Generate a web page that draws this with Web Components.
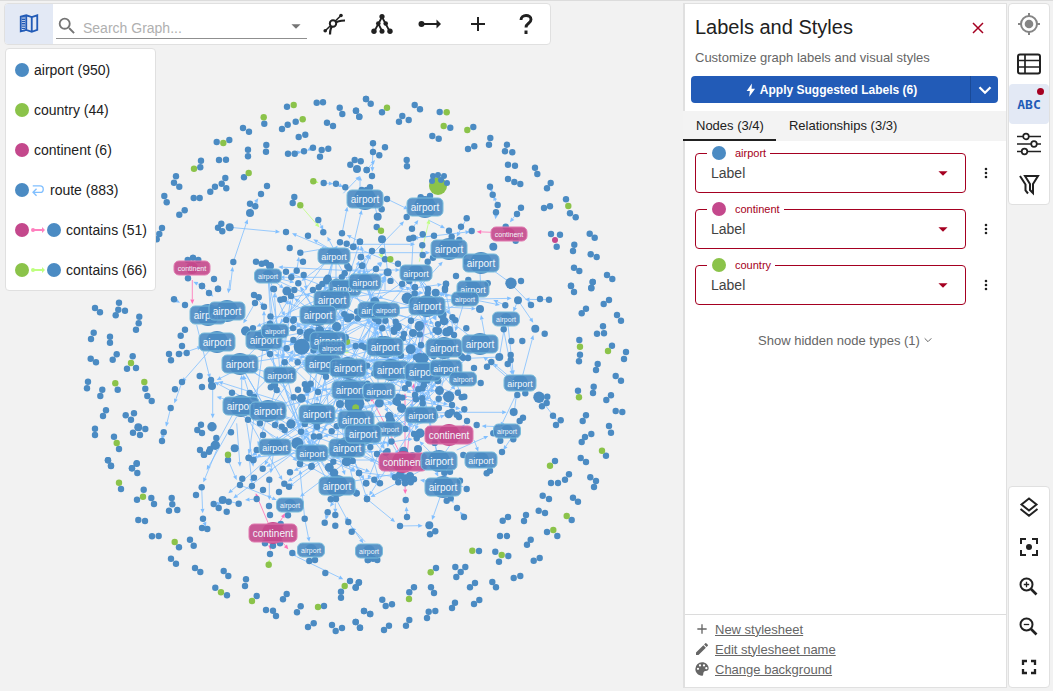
<!DOCTYPE html>
<html lang="en">
<head>
<meta charset="utf-8">
<title>Graph Explorer</title>
<style>
  html, body { margin: 0; height: 100%; }
  body { background: #f2f2f2; color: #212121; font-family: "Liberation Sans", Arial, sans-serif; font-size: 14px; overflow: hidden; }
</style>
</head>
<body>
<graph-app></graph-app>
<script>
const define = (name, html, ready) => customElements.define(name, class extends HTMLElement {
  connectedCallback() {
    if (this.shadowRoot) return;
    const t = document.createElement('template');
    t.innerHTML = html;
    this.attachShadow({ mode: 'open' }).append(t.content.cloneNode(true));
    if (ready) ready.call(this, this.shadowRoot);
  }
});

/* ---------- icons ---------- */
const line = (d, w = 2) => `<path d="${d}" fill="none" stroke="currentColor" stroke-width="${w}"/>`;
const fill = d => `<path d="${d}" fill="currentColor"/>`;
const ICONS = {
  map: line('M3 4l6-1.500 6 2 6-2v16l-6 2-6-2-6 1.500zM9 3v16M15 5v16') + '<path d="M6 3.500v16.500" stroke="currentColor" stroke-width="3.500" stroke-dasharray="1.500 1"/>',
  search: fill('M15.500 14h-.79l-.28-.27A6.470 6.470 0 0 0 16 9.500 6.500 6.500 0 1 0 9.500 16c1.610 0 3.090-.59 4.230-1.570l.27.28v.79l5 4.990L20.490 19l-4.990-5zm-6 0a4.500 4.500 0 1 1 0-9 4.500 4.500 0 0 1 0 9z'),
  caret: fill('M7 10l5 5 5-5z'),
  expand: line('M3.500 18.500L19 3.500', 1.600) + line('M8 22.500C8 14 12 8.500 23 8.500', 2.200) + '<circle cx="11" cy="11.500" r="3.200" fill="#fff" stroke="currentColor" stroke-width="2"/>' + '<circle cx="19" cy="3.500" r="1.800"/><circle cx="3.200" cy="18.800" r="1.800"/>',
  tree: line('M12 5L4.500 19M12 5l7.500 14M8.500 12l3.500 7', 1.800) + '<circle cx="12" cy="4.500" r="2.600"/><circle cx="8.300" cy="11.500" r="2.300"/><circle cx="15.700" cy="11.500" r="2.300"/><circle cx="4" cy="19.300" r="2.700"/><circle cx="12" cy="19.300" r="2.500"/><circle cx="20" cy="19.300" r="2.700"/>',
  edge: line('M4 12h16') + '<circle cx="3.500" cy="12" r="3"/>' + fill('M18.500 7.500L23 12l-4.500 4.500z'),
  plus: line('M12 5v14M5 12h14'),
  help: line('M7 8c0-6 10-6 10-.5 0 4-5 3.500-5 8', 2.900) + '<rect x="10.500" y="18.500" width="3" height="3.500"/>',
  close: line('M6 6l12 12M18 6L6 18', 1.800),
  bolt: fill('M13.500 1L4.500 13.500h5.500l-1 10 10-13.500h-6z'),
  down: line('M6 9l6 6 6-6', 2.500),
  downThin: line('M4 8l8 8 8-8', 2.400),
  dots: '<circle cx="12" cy="5" r="2.200"/><circle cx="12" cy="12" r="2.200"/><circle cx="12" cy="19" r="2.200"/>',
  target: '<circle cx="12" cy="12" r="4.300"/><circle cx="12" cy="12" r="8" fill="none" stroke="currentColor" stroke-width="2"/>' + line('M12 1v3M12 20v3M1 12h3M20 12h3'),
  table: '<rect x="1" y="2.500" width="22" height="19" rx="2" fill="none" stroke="currentColor" stroke-width="2"/>' + line('M1 8.500h22M1 15h22M8 3v18', 1.700),
  sliders: line('M0 4.500h24M0 12h24M0 19.500h24', 1.700) + '<g fill="#fff" stroke="currentColor" stroke-width="1.700"><circle cx="9" cy="4.500" r="2.800"/><circle cx="17" cy="12" r="2.800"/><circle cx="7.500" cy="19.500" r="2.800"/></g>',
  filter: line('M8 4h13l-5 8v9l-3-3v-6z') + line('M3 4l5.500 8.500v6l2.500 3', 2),
  layers: line('M12 3.500l7.500 6-7.500 6-7.500-6zM3.500 14l8.500 6.700 8.500-6.700'),
  center: line('M4 9V4h5M15 4h5v5M20 15v5h-5M9 20H4v-5') + '<circle cx="12" cy="12" r="3"/>',
  zoomin: '<circle cx="9.500" cy="9.500" r="6" fill="none" stroke="currentColor" stroke-width="2"/>' + line('M14 14l5.500 5.500', 2.600) + line('M9.500 6.800v5.400M6.800 9.500h5.400', 1.300),
  zoomout: '<circle cx="9.500" cy="9.500" r="6" fill="none" stroke="currentColor" stroke-width="2"/>' + line('M14 14l5.500 5.500', 2.600) + line('M6.800 9.500h5.400', 1.300),
  full: line('M6 10V6h4M14 6h4v4M18 14v4h-4M10 18H6v-4', 2.300),
  pencil: fill('M3 17.250V21h3.750L17.810 9.940l-3.750-3.750zM20.710 7.040a1 1 0 0 0 0-1.410l-2.340-2.340a1 1 0 0 0-1.410 0l-1.830 1.830 3.750 3.750z'),
  palette: '<path fill="currentColor" fill-rule="evenodd" d="M12 2a10 10 0 0 0-10 10c0 5 4 10 10 10 3 0 1-4 3-6 2-1.500 7 0 7-5 0-5-4.500-9-10-9zM6 10a1.700 1.700 0 1 1 0 3.400A1.700 1.700 0 0 1 6 10zM9 5a1.700 1.700 0 1 1 0 3.400A1.700 1.700 0 0 1 9 5zM15 5a1.700 1.700 0 1 1 0 3.400A1.700 1.700 0 0 1 15 5zM18.500 9a1.700 1.700 0 1 1 0 3.400A1.700 1.700 0 0 1 18.500 9z"/>',
  loop: line('M3 5h12.500a5 5 0 0 1 0 11H4M9.500 10L3.500 16l6 6', 2.300)
};
define('app-icon', `<style>:host{display:inline-flex;width:24px;height:24px;flex:none}svg{width:100%;height:100%}</style><svg viewBox="0 0 24 24" fill="currentColor" aria-hidden="true"></svg>`,
  function (r) { r.querySelector('svg').innerHTML = ICONS[this.getAttribute('name')]; });

/* ---------- graph canvas ---------- */
const BLUE = '#4b8bc3', GREEN = '#8bc34a', PINK = '#c4488c';
/* Node positions are stored per tile, in thirds of a pixel; an optional third number is the radius. */
const TILES = [
 { x: 80, y: 90,
   b: '621,50 710,38 729,37 779,53 787,72 828,62 838,80 858,27 553,101 647,95 623,104 606,117 741,98 759,108 656,141 676,134 489,114 507,125 410,156 448,150 559,165 558,185 504,179 504,199 417,210 438,209 624,191 644,191 672,184 699,173 725,180 745,176 720,200 363,212 361,232 288,259 282,278 298,290 492,262 436,264 425,281 439,295 405,290 391,305 253,318 260,337 341,324 359,324 314,361 298,374 246,414 238,432 230,448 561,288 543,312 510,341 526,349 510,369,12 424,401 414,413 427,424 449,412,12 618,426 684,437 629,474 661,488 669,515 650,542 671,555 634,562 618,545 655,580 460,516 731,279 768,281 796,292 643,321 638,339 715,390 730,427 786,430 780,457 800,461 820,470 840,455 824,210 842,214 811,224 831,237,12 860,240 802,528 842,501 846,527 744,563 727,582 716,592 528,515 545,521 558,518 570,528,12 324,565 366,588 402,567 414,596 582,597 643,600 323,510 339,503 355,510 845,300 860,300',
   g: '641,45 551,82 668,88 430,159 342,236 506,249 700,274 661,346',
   e: '449,412,600,426 460,516,503,388 450,600,458,530 731,279,760,281 768,281,790,291 510,360,535,325 755,480,636,430 755,480,700,448 786,430,802,350 820,465,845,360 763,480,742,440 661,488,740,475 870,545,595,531 870,562,600,562 366,588,340,575 715,390,730,420 800,530,790,560 650,542,657,500 671,555,680,600 768,500,768,600 624,191,665,186 699,173,680,182 840,300,840,258 790,310,840,258 840,455,800,435',
   ge: '661,346,718,412 700,274,716,278' },
 { x: 350, y: 90,
   b: '48,27 62,41 18,62 28,80 96,67 194,45 210,58 157,78 147,95 176,90 269,66 301,113 370,111 247,138 266,146 354,177 373,169 421,144 417,164 471,164 465,184 487,187 170,210 171,229 69,160 69,186 88,196 105,172 66,258 50,240 474,224 495,227 555,233 562,252 474,267 493,276 511,282 602,279 591,295 420,290 428,314 443,345 438,367 513,353 501,372 582,354 600,349 648,328 660,370 677,382 111,327 170,381 350,385 333,410 297,422 365,423 252,437 186,416 218,433 178,446 190,443 217,466 218,495 95,358 83,380,12 80,411 96,448,12 66,483 97,483 105,508 144,521 113,547,12 30,455 10,471 33,501 37,527 78,537 467,410 497,452 430,470,12 603,432 630,434 620,470 673,464 669,483 719,431 734,443 722,493 740,501 672,533 688,543 771,555 787,567 728,576 724,593 663,588 483,580,17 513,573 318,558 288,581 195,592 234,597 233,515 249,503 355,570 285,595 413,580 212,322 240,318 305,440 328,450 350,515 60,292',
   g: '111,53 290,67 281,108 352,120 655,348 93,422 121,508',
   e: '111,327,175,358 440,365,436,388 443,345,430,318 513,353,480,397 420,290,427,308 178,446,360,425 252,437,190,445 435,545,483,580 69,160,67,245 50,240,75,210 0,560,162,394 235,390,285,415 350,385,320,440 0,463,195,463 0,488,240,488 0,540,150,540 80,370,60,285 186,416,205,390 190,440,182,590 113,547,100,440 355,570,320,600 200,600,278,515 390,550,393,600 113,547,160,600 105,600,105,540',
   ge: '208,515,238,388 121,508,85,493', me: '425,427,380,425' },
 { x: 80, y: 280,
   b: '45,84 60,97 117,68 115,89 107,106 135,92 178,110 176,130 168,149 41,158 33,177 90,170 90,188 110,223 98,239 32,236 48,247 158,229 141,266 168,264 24,305 21,325 67,329 61,348 113,329 196,326 202,348 215,363 78,391 69,408 137,406 162,400 153,419 45,446 45,465 175,442,12 196,447 159,458 180,465 102,470 117,507 84,541 93,557 170,550 156,565 315,75 282,58 315,149 302,167 306,198 297,222,10 320,219 267,222 273,241 306,306 285,328 272,384 251,457 246,483 359,288 366,321 393,300 396,318,12 366,18 387,39 414,27 363,434 352,450 366,459 396,440,14 409,474 406,496,14 390,508 360,510 372,524 444,540 464,505,12 453,457 504,419 456,338 509,339 522,45 536,52 525,69 552,80 580,27 612,57 633,48 497,153,14 570,222 614,247 620,205 653,247 582,315 590,330 641,352 654,329 681,327,12 714,336 738,290 549,465 540,430 585,435 605,440 633,432,14 614,450 663,455 755,454 711,440 652,490,18 660,550 694,560 780,372,12 823,370,30 665,200,24 690,165,20 720,150,12 770,140,14 660,155 640,180 814,110 833,115 845,197 827,198 506,533 520,540 760,545 800,545,14 530,510',
   g: '153,249 106,310 193,306 110,489 444,524 827,383 801,185',
   e: '350,135,390,295 390,210,306,306 306,306,283,370 272,384,258,440 251,457,246,480 398,318,398,415 300,222,365,200 485,345,485,285 510,350,490,285 600,287,520,265 470,410,380,570 460,400,400,510 490,410,600,480 540,390,410,350 620,370,415,305 282,58,300,68 366,18,400,50 450,0,445,40 525,69,490,130 522,45,552,80 660,60,600,130 700,110,560,110 470,270,410,300 570,222,555,205 614,247,640,210 600,310,690,410 470,430,480,560 500,430,520,560',
   me: '337,0,337,72' , ge: '801,220,801,205' },
 { x: 350, y: 280,
   b: '504,61,12 570,57 597,59 543,75 466,76 390,87,12 461,148 556,146,12 584,161 484,183 517,183 448,231,12 482,225 482,240 473,252 424,246 411,260 372,264 354,234 392,309 349,145 316,121 282,123,13 264,153,12 300,155 312,165 189,159,12 183,122 137,125 97,145 132,155 162,162 172,55,17 195,22 288,12 285,30 257,38,12 233,40 213,195 182,208,15 220,235,16 165,325 205,328 195,345 198,358 139,364,12 155,385,14 118,408,13 182,398 266,356 296,350,17 335,352 343,350 306,375 343,388 296,402,13 327,411 351,423 380,435 491,396,12 519,413 509,423 567,352,17 592,350 590,369 576,379 609,407 632,421 618,435 502,345 526,340 451,482 490,478 430,460 456,516 340,525 204,507,12 81,522 166,447 210,460,14 200,475 663,17 672,36 728,6 724,25 777,60 761,72 708,86 695,100 801,105 813,122 759,139 762,160 741,161 688,180 690,224 687,244 786,197 828,216 822,237 743,252 738,270 797,288 813,302 731,320 729,339 684,332 783,346 769,360 797,393 817,396 708,406 698,423 777,438 783,458 724,462 705,471 695,486 768,527 615,543 692,534 708,546',
   g: '690,200 774,213 687,352 756,512 600,557 17,383',
   e: '461,150,487,285 472,115,490,285 517,290,550,165 504,61,550,128 504,61,490,95 483,12,545,75 597,59,525,58 405,170,393,105 500,340,452,440 500,340,491,410 340,397,470,397 200,400,340,397 567,352,620,420 490,300,430,250 320,510,415,468 372,480,385,515 450,440,395,438 480,300,400,230 450,231,350,235 480,480,460,510 375,60,450,75 250,60,485,55 466,76,430,60 448,231,465,130',
   me: '210,222,226,120 165,520,165,340 172,520,192,310 150,520,62,350' },
 { x: 80, y: 450,
   b: '84,31 93,48 170,41 156,55 172,69 123,117 191,119 171,149 214,144 222,162 275,144 277,163 267,182 292,180 175,210 195,213 216,259 236,258 330,269 341,287 297,292 273,326 288,341 345,354 361,366 431,363 445,378 498,388 495,408 406,413 441,436 530,438 620,432 609,448 558,480 579,482 588,498 662,469 651,487 701,520 684,531 732,468 756,525 767,543 786,534 827,516 840,533 852,483 870,492 783,425 783,443 810,393 836,398 827,413 736,369 365,112 348,135 369,206 366,234 382,237 401,162 416,174 428,150,12 446,155 440,185 476,161 480,105 487,86 516,108 522,83 548,56 549,120 568,89 530,147 567,168 570,195 506,24 520,30 387,5 372,14 630,67 613,101 627,110 597,126 660,42 695,48 674,206 624,196 570,312 637,309 762,68,13 837,69 858,100 830,130 752,148 768,147 861,147 743,187 766,195 734,218 766,227 805,216 815,245 795,36 818,33 688,333 705,330 555,280 579,287 600,280 863,330 602,222',
   g: '117,98 189,140 284,276 566,344 423,427 516,453 714,471 794,408',
   e: '410,0,370,97 365,112,368,190 369,206,378,230 440,20,470,90 505,0,516,100 580,12,445,130 580,12,572,70 640,10,460,145 568,89,568,150 480,105,590,150 674,206,660,60 674,206,688,275 637,309,650,320 650,320,790,388 768,147,805,216 805,216,850,280 800,35,660,140 720,40,627,110 795,0,830,130 700,10,768,147 780,30,795,75 476,161,440,152 530,147,495,150 765,150,750,170 743,187,737,210 766,160,766,190 400,162,425,160 705,10,870,65',
   me: '565,220,527,130 600,215,615,190 610,280,625,298 571,280,571,300', ge: '568,344,568,328' },
 { x: 350, y: 450,
   b: '657,73 645,89 624,99 603,99 721,82 738,93 732,111 578,137 597,147 669,143 684,155 566,182 585,189 665,210 591,246 622,258 474,201 458,212 528,195 522,213 450,258 471,258 542,269 531,284 387,303 436,305 475,318 447,335 569,324 551,332 258,354 316,351 346,351 332,366 319,381 375,399 360,412 427,396 438,412 491,384 511,378 192,412 178,427 243,412 252,429 97,449 107,468 126,463 42,483 61,492 236,485 256,483 231,504 315,458 306,474 388,450 372,462 178,510 168,527 117,527 102,540 17,516 30,533 27,397 17,412 167,150 171,201 150,228 238,226,12 256,244 240,253 51,147 27,69 19,130 49,100 73,89 90,100 350,117 321,174 342,201 290,152 302,145 420,62 410,70 300,65 283,68 330,92 54,330 69,326 82,330 135,82 150,75,12 180,78,12 192,88 165,100 145,97 182,97 165,85,12',
   g: '650,198 610,240 367,302 455,315 242,367 177,447',
   e: '51,147,135,216 150,228,218,227 270,142,246,210 171,201,169,170 342,201,330,185 300,130,310,160 10,20,51,147 10,30,75,30 0,95,135,72 20,65,135,80 340,110,210,90 250,50,265,80 290,50,285,85 45,275,5,232 73,89,80,105 420,62,440,20',
   me: '165,100,166,132' }
];
/* Label kinds: L, M and S sizes; x, y in pixels, bottom of the stack first. */
const LABELS = `a S 268 276|a M 334 256|a M 345 288|a M 365 282|a L 332 300|a L 318 315|a L 365 199|a L 425 207|a L 449 249|a L 481 263|a M 416 273|a L 208 315|a L 227 311|a L 217 342|a L 240 364|a L 241 406|a L 268 411|a L 264 340|a S 275 331|a M 473 289|a S 465 299|a L 427 306|a M 374 310|a S 386 310|a L 328 341|a S 332 348|a L 385 347|a L 444 348|a L 480 344|a L 323 364|a L 348 368|a L 391 370|a L 423 372|a M 446 368|a L 350 390|a M 379 391|a M 280 375|a S 463 379|a S 506 319|a M 520 383|a L 317 414|a M 421 415|a S 389 429|a L 356 420|a L 347 448|a L 363 434|a M 275 447|a M 312 453|a L 337 486|c L 403 462|c L 449 435|a L 439 461|a M 481 460|a L 443 487|a S 507 431|a S 290 505|a S 311 550|a S 369 551|c L 273 533|c S 192 268|c S 509 234`;
define('graph-canvas', `<style>:host{display:block}svg{display:block;width:100%;height:100%;font-family:"Liberation Sans",Arial,sans-serif}</style>
<svg role="img" aria-label="Route graph"><g id="edges"></g><g id="nodes"></g><g id="labels"></g></svg>`, function (r) {
  const n = v => v.toFixed(1);
  const nodes = [], edges = [];
  const read = (s, fn) => s && s.split(' ').forEach(p => fn(p.split(',').map(Number)));
  const dot = (x, y, c, rad) => nodes.push({ x, y, c, r: rad });
  const edge = (x1, y1, x2, y2, c) => {
    const a = Math.atan2(y2 - y1, x2 - x1), w = 2, l = 4.500;
    const bx = x2 - l * Math.cos(a), by = y2 - l * Math.sin(a);
    edges.push(`<path d="M${n(x1)} ${n(y1)}L${n(bx)} ${n(by)}" stroke="${c}" stroke-width=".8"/><path fill="${c}" d="M${n(x2)} ${n(y2)}L${n(bx - w * Math.sin(a))} ${n(by + w * Math.cos(a))}L${n(bx + w * Math.sin(a))} ${n(by - w * Math.cos(a))}z"/>`);
  };
  for (const t of TILES) {
    for (const [k, c] of [['b', BLUE], ['g', GREEN]]) read(t[k], ([x, y, q]) => dot(t.x + x / 3, t.y + y / 3, c, (q || 9.500) / 3));
    for (const [k, c] of [['e', '#80bfff'], ['ge', '#bfff80'], ['me', '#ff70b8']]) read(t[k], ([a, b, d, e]) => edge(t.x + a / 3, t.y + b / 3, t.x + d / 3, t.y + e / 3, c));
  }
  const labels = LABELS.split('|').map(s => { const [k, z, x, y] = s.split(' '); return { k, z, x: +x, y: +y }; });
  let seed = 41;
  const rnd = () => (seed = (seed * 16807) % 2147483647) / 2147483647;
  for (let i = 0; i < 125; i++) {
    const a = rnd() * 6.283, d = Math.sqrt(rnd());
    dot(355 + Math.cos(a) * d * 115, 370 + Math.sin(a) * d * 103, BLUE, rnd() < .15 ? 4.500 : 3.200);
  }
  const core = nodes.filter(p => p.c === BLUE && Math.hypot(p.x - 355, (p.y - 372) * 1.150) < 150);
  const hubs = labels.filter(l => l.k === 'a' && Math.hypot(l.x - 355, l.y - 370) < 140);
  for (const h of hubs) for (let i = 0; i < 14; i++) {
    const p = core[Math.floor(rnd() * core.length)];
    const d = Math.hypot(p.x - h.x, p.y - h.y);
    if (d < 120 && d > 12) edge(h.x, h.y, p.x - (p.x - h.x) * 4 / d, p.y - (p.y - h.y) * 4 / d, '#80bfff');
  }
  for (const l of labels) dot(l.x, l.y, l.k === 'a' ? BLUE : PINK, { L: 11, M: 8, S: 6 }[l.z]);
  dot(438, 186, GREEN, 9);
  for (const [x, y] of [[433, 176], [438, 175], [444, 176], [432, 181], [441, 180], [447, 183]]) dot(x, y, BLUE, 3);
  dot(555, 240, PINK, 3);
  r.getElementById('edges').innerHTML = edges.join('');
  r.getElementById('nodes').innerHTML = nodes.map(p => `<circle cx="${n(p.x)}" cy="${n(p.y)}" r="${n(p.r)}" fill="${p.c}"/>`).join('');
  const size = { a: { L: [36, 18, 10], M: [32, 16, 9], S: [27, 14, 7] }, c: { L: [48, 18, 10], S: [36, 14, 7] } };
  r.getElementById('labels').innerHTML = labels.map(l => {
    const [w, h, f] = size[l.k][l.z], air = l.k === 'a';
    return `<rect x="${l.x - w / 2}" y="${l.y - h / 2}" width="${w}" height="${h}" rx="5" fill="${air ? BLUE : PINK}" fill-opacity=".9" stroke="${air ? '#78bcdc' : '#e07ab0'}" stroke-width="1"/><text x="${l.x}" y="${l.y + Math.round(f * .4)}" font-size="${f}" text-anchor="middle" fill="#f2f7fc">${air ? 'airport' : 'continent'}</text>`;
  }).join('');
});

/* ---------- toolbar and legend ---------- */
define('tool-bar', `<style>
:host{display:flex;align-items:stretch;width:545px;height:40px;background:#fff;border:1px solid #e0e0e0;border-radius:4px;overflow:hidden}
button{width:48px;border:0;padding:0;background:none;color:#212121;display:flex;align-items:center;justify-content:center}
button.on{background:#e3e9f5;color:#225bb7}
button.on app-icon{width:22px;height:22px}
label{display:flex;flex:1;align-items:center;margin:0 3px 5px;padding-top:9px;border-bottom:1px solid #8f8f8f;color:#757575}
label app-icon:first-child{width:22px;height:22px}
input{flex:1;min-width:0;border:0;outline:0;padding:4px 0 0 5px;background:none;font:14px "Liberation Sans",Arial,sans-serif;color:#212121}
input::placeholder{color:#b0b0b0;opacity:1}
label app-icon:last-child{width:22px;height:22px}
</style>
<button class="on" aria-label="Legend"><app-icon name="map"></app-icon></button>
<label><app-icon name="search"></app-icon><input type="text" aria-label="Search graph" placeholder="Search Graph..."><app-icon name="caret"></app-icon></label>
<button aria-label="Expand"><app-icon name="expand"></app-icon></button>
<button aria-label="Layout"><app-icon name="tree"></app-icon></button>
<button aria-label="Connect"><app-icon name="edge"></app-icon></button>
<button aria-label="Add"><app-icon name="plus"></app-icon></button>
<button aria-label="Help"><app-icon name="help"></app-icon></button>`);

define('color-dot', `<style>:host{display:inline-block;width:14px;height:14px;border-radius:50%;background:var(--dot);flex:none}</style>`);

define('type-legend', `<style>
:host{display:block;box-sizing:border-box;width:151px;background:#fff;border:1px solid #e0e0e0;border-radius:4px}
ul{list-style:none;margin:0;padding:1px 0 0 9px}
li{display:flex;align-items:center;height:40px;white-space:nowrap}
li span{margin-left:5px}
app-icon{width:14px;height:14px;margin:0 1px 0 2px;color:#80bfff}
li app-icon + span{margin-left:4px}
svg{width:14px;height:14px;margin:0 2px}
</style><ul></ul>`, function (r) {
  const arrow = c => `<svg viewBox="0 0 14 14" fill="${c}"><path d="M2 6h10v2H2z"/><circle cx="2" cy="7" r="2"/><path d="M11 4l3 3-3 3z"/></svg>`;
  const d = c => `<color-dot style="--dot:${c}"></color-dot>`;
  r.querySelector('ul').innerHTML = [
    d(BLUE) + '<span>airport (950)</span>', d(GREEN) + '<span>country (44)</span>', d(PINK) + '<span>continent (6)</span>',
    d(BLUE) + '<app-icon name="loop"></app-icon><span>route (883)</span>',
    d(PINK) + arrow('#ff80bf') + d(BLUE) + '<span>contains (51)</span>',
    d(GREEN) + arrow('#bfff80') + d(BLUE) + '<span>contains (66)</span>'
  ].map(x => `<li>${x}</li>`).join('');
});

/* ---------- styles panel ---------- */
define('label-field', `<style>
:host{display:flex;align-items:flex-start;height:56px}
fieldset{flex:1;min-width:0;box-sizing:border-box;height:47px;margin:0;padding:0 11px;border:1px solid #a50021;border-radius:4px}
legend{display:flex;align-items:center;gap:9px;height:14px;padding:0 4px 0 5px;font-size:11px;color:#a50021}
.box{display:grid;align-items:center;margin-top:-1px;height:28px}
select,.box app-icon{grid-area:1/1}
select{appearance:none;border:0;background:none;width:100%;padding:0 4px;height:28px;font:14px "Liberation Sans",Arial,sans-serif;color:#424242;outline:0}
.box app-icon{justify-self:end;color:#a50021;pointer-events:none;width:22px;height:22px}
button{border:0;background:none;padding:0;width:40px;height:40px;margin-top:7px;display:flex;align-items:center;justify-content:center;color:#212121}
button app-icon{width:14px;height:14px}
</style>
<fieldset><legend><color-dot></color-dot><label for="s"><slot></slot></label></legend>
<div class="box"><select id="s"><option>Label</option></select><app-icon name="caret"></app-icon></div></fieldset>
<button aria-label="More options"><app-icon name="dots"></app-icon></button>`);

define('styles-panel', `<style>
:host{display:flex;flex-direction:column;box-sizing:border-box;background:#fff;border:solid #e0e0e0;border-width:1px 1px 1px 2px;font-size:13px}
header{display:flex;justify-content:space-between;align-items:center;padding:0 18px 0 10px;height:46px}
h1{font-size:20px;font-weight:400;margin:0;line-height:46px}
button{font:inherit;border:0;background:none;padding:0;display:flex;align-items:center;justify-content:center;color:inherit}
.x{color:#a50021;width:20px;height:20px;margin-top:2px}
.x app-icon{width:20px;height:20px}
p{margin:0;padding:0 10px;line-height:16px;color:#666}
.apply{display:flex;margin:10px 8px 8px 6px;height:27px;border-radius:4px;overflow:hidden;background:#225bb7;color:#fff;font-size:12px;font-weight:700;flex:none}
.apply button:first-child{flex:1;gap:2px}
.apply button:last-child{width:28px;border-left:1px solid #1a4a97}
.apply app-icon{width:14px;height:14px}
.apply button:last-child app-icon{width:22px;height:22px}
nav{display:flex;height:30px;background:#f3f3f3;margin-left:-2px;flex:none}
nav button{padding:0 12px 0 13px;border-bottom:2px solid transparent}
nav button[aria-selected=true]{border-color:#212121}
.fields{padding:5px 0 0 10px}
.more{align-self:center;color:#666;margin-top:16px;height:20px;gap:3px}
.more app-icon{width:10px;height:10px}
footer{margin-top:auto;border-top:1px solid #dcdcdc;padding:4px 0 8px 9px;color:#666}
footer div{display:flex;align-items:center;gap:5px;height:20px}
footer app-icon{width:16px;height:16px}
a{color:#666}
</style>
<header><h1>Labels and Styles</h1><button class="x" aria-label="Close"><app-icon name="close"></app-icon></button></header>
<p>Customize graph labels and visual styles</p>
<div class="apply"><button><app-icon name="bolt"></app-icon>Apply Suggested Labels (6)</button><button aria-label="More"><app-icon name="down"></app-icon></button></div>
<nav role="tablist"><button role="tab" aria-selected="true">Nodes (3/4)</button><button role="tab" aria-selected="false">Relationships (3/3)</button></nav>
<div class="fields"><label-field style="--dot:#4b8bc3">airport</label-field><label-field style="--dot:#c4488c">continent</label-field><label-field style="--dot:#8bc34a">country</label-field></div>
<button class="more">Show hidden node types (1)<app-icon name="downThin"></app-icon></button>
<footer><div><app-icon name="plus"></app-icon><a href="#">New stylesheet</a></div><div><app-icon name="pencil"></app-icon><a href="#">Edit stylesheet name</a></div><div><app-icon name="palette"></app-icon><a href="#">Change background</a></div></footer>`);

/* ---------- side rail ---------- */
define('side-rail', `<style>
:host{display:flex;flex-direction:column;justify-content:space-between}
div{background:#fff;border:1px solid #e0e0e0;border-radius:4px}
button{position:relative;display:flex;align-items:center;justify-content:center;width:40px;height:40px;padding:0;border:0;background:none;color:#212121;border-radius:4px}
.dim{color:#858585}
.on{background:#e3e9f5;color:#225bb7;font:700 13px "DejaVu Sans Mono",monospace}
.on i{position:absolute;top:4px;right:5px;width:7px;height:7px;border-radius:50%;background:#a50021}
</style>
<div><button class="dim" aria-label="Locate"><app-icon name="target"></app-icon></button><button aria-label="Table"><app-icon name="table"></app-icon></button><button class="on">ABC<i></i></button><button aria-label="Settings"><app-icon name="sliders"></app-icon></button><button aria-label="Filter"><app-icon name="filter"></app-icon></button></div>
<div><button aria-label="Layers"><app-icon name="layers"></app-icon></button><button aria-label="Center"><app-icon name="center"></app-icon></button><button aria-label="Zoom in"><app-icon name="zoomin"></app-icon></button><button aria-label="Zoom out"><app-icon name="zoomout"></app-icon></button><button aria-label="Full screen"><app-icon name="full"></app-icon></button></div>`);

define('graph-app', `<style>
:host{display:flex;box-sizing:border-box;height:100vh;padding:2px 3px 3px 0;border-top:1px solid #dcdcdc}
main{position:relative;flex:1;min-width:0;padding-left:4px}
graph-canvas{position:absolute;inset:-3px 0 -3px 0}
tool-bar,type-legend{position:relative}
type-legend{margin:3px 0 0 1px}
styles-panel{width:324px;flex:none}
side-rail{margin-left:1px;flex:none}
</style>
<main><graph-canvas></graph-canvas><tool-bar></tool-bar><type-legend></type-legend></main><styles-panel></styles-panel><side-rail></side-rail>`);
</script>
</body>
</html>
